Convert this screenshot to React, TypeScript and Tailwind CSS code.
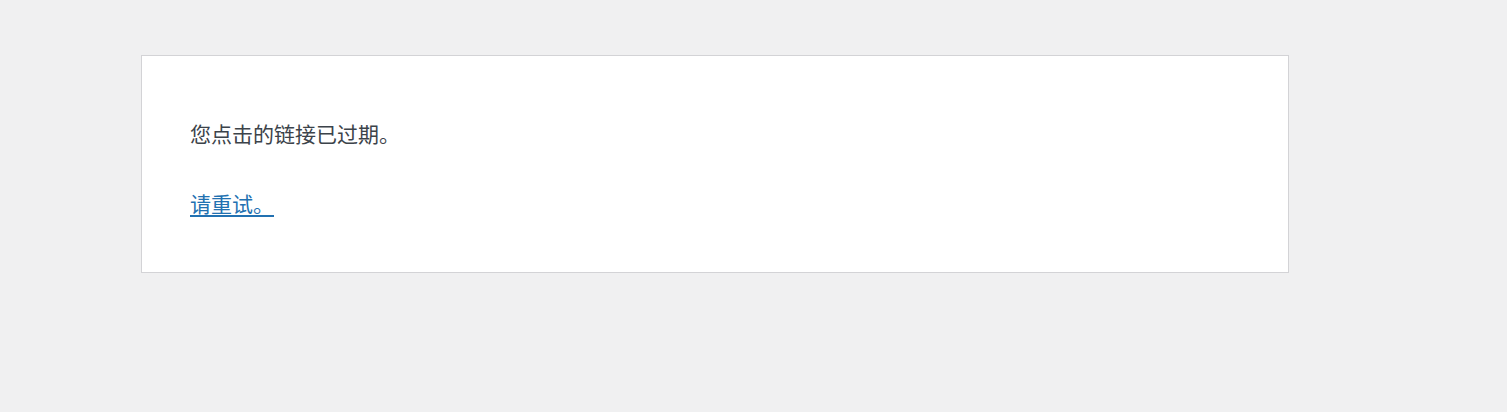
export default function App() {
  return (
    <div className="min-h-[412px] w-full bg-[#f0f0f1] pt-[55px] font-['Noto_Sans_CJK_SC','Noto_Sans',sans-serif]">
      <div className="ml-[141px] w-[1148px] border border-[#d3d3d6] bg-white pl-[48px] pt-[62px] pb-[54px] text-[21px] leading-[30px] text-[#3c434a]">
        <p>您点击的链接已过期。</p>
        <p className="mt-[40px]">
          <a href="#" className="text-[#2271b1] underline underline-offset-[3px]">
            请重试。
          </a>
        </p>
      </div>
    </div>
  )
}
